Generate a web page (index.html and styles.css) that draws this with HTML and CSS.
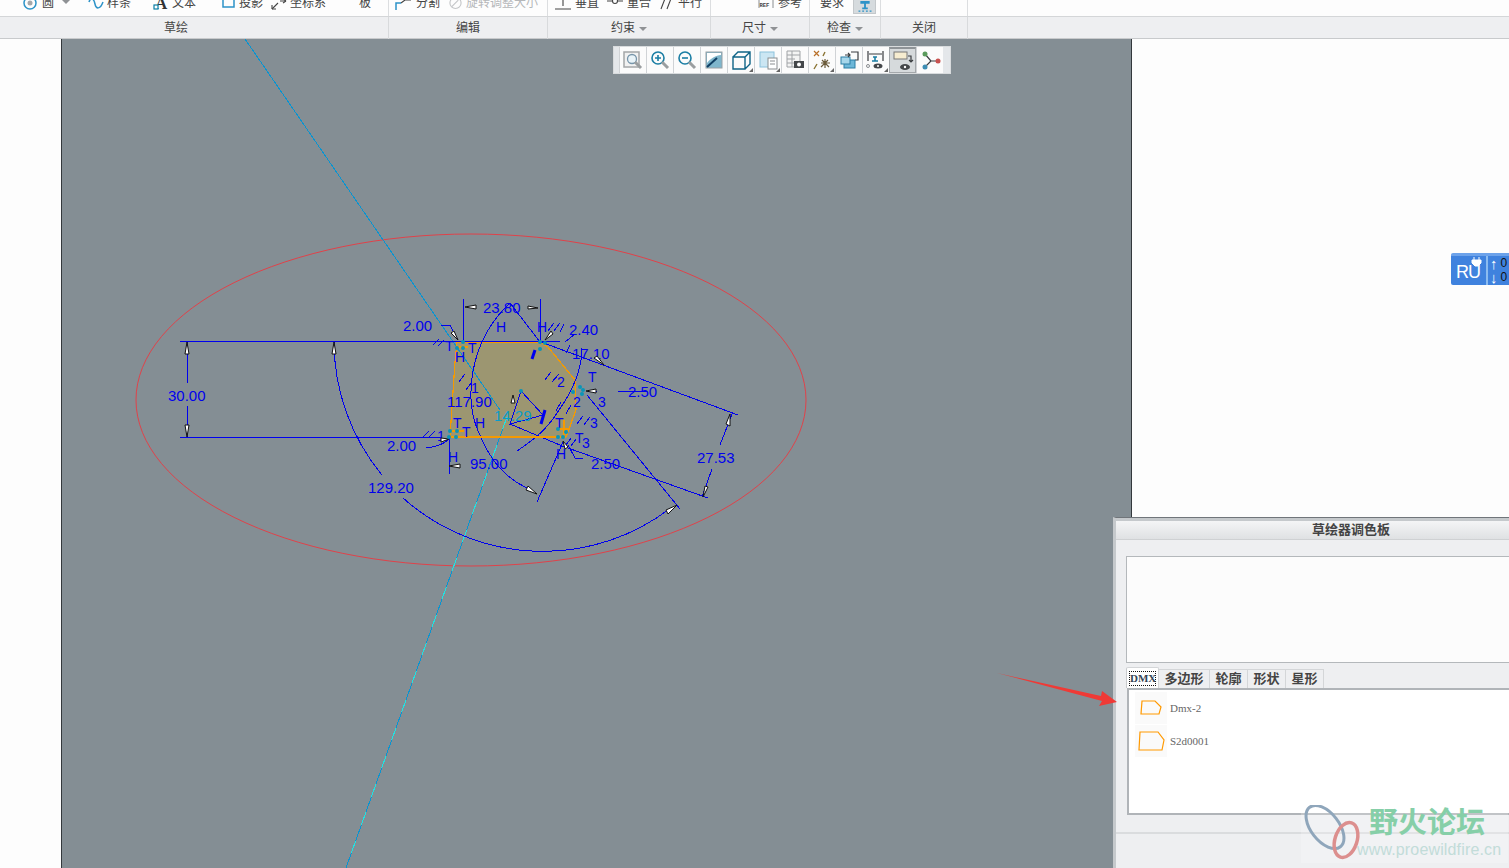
FILE: index.html
```html
<!DOCTYPE html>
<html lang="zh">
<head>
<meta charset="utf-8">
<title>草绘器调色板</title>
<link rel="stylesheet" href="styles.css">
</head>
<body>
<div class="app">
  <header class="ribbon">
    <div class="tools">
      <div class="group">
        <div class="tool t-circle"><svg class="ic" viewBox="0 0 16 16"><circle cx="8" cy="9" r="6" class="s-blue"/><circle cx="8" cy="9" r="2.500" class="f-grey"/></svg><span>圆</span><i class="caret caret-gap"></i></div>
        <div class="tool t-spline"><svg class="ic" viewBox="0 0 16 16"><path d="M1 8c2-6 5-3 6 2s5 6 8-2" class="s-blue"/></svg><span>样条</span></div>
        <div class="tool t-text"><svg class="ic" viewBox="0 0 16 16"><text x="2" y="15" class="ic-a">A</text><rect x="1" y="11" width="4" height="4" class="s-teal"/></svg><span>文本</span></div>
        <div class="tool t-proj"><svg class="ic ic-n" viewBox="0 0 13 16"><path d="M1 0v13h11V0" class="s-blue"/></svg><span>投影</span></div>
        <div class="tool t-coord"><svg class="ic" viewBox="0 0 16 16"><path d="M1 15l6-6m2-2h6" class="s-dark"/><path d="M1 15v-4M1 15h4M15 7l-3-2M15 7l-3 2" class="s-dark"/></svg><span>坐标系</span></div>
        <div class="tool t-board"><span>板</span></div>
      </div>
      <div class="group">
        <div class="tool t-split"><svg class="ic ic-w" viewBox="0 0 17 16"><path d="M1 16V9h5" class="s-blue"/><path d="M6 9l4-3h6" class="s-dark"/></svg><span>分割</span></div>
        <div class="tool t-rotate dim"><svg class="ic ic-n" viewBox="0 0 14 16"><circle cx="7" cy="9" r="6" class="s-light"/><path d="M3 13l7-7" class="s-light"/></svg><span>旋转调整大小</span></div>
      </div>
      <div class="group">
        <div class="tool t-perp"><svg class="ic" viewBox="0 0 16 16"><path d="M8 3v9M3 3h10M0 15h16" class="s-dark"/></svg><span>垂直</span></div>
        <div class="tool t-coin"><svg class="ic" viewBox="0 0 16 16"><path d="M0 7h5m6 0h5" class="s-dark"/><circle cx="8" cy="7" r="2.500" class="s-dark"/></svg><span>重合</span></div>
        <div class="tool t-para"><svg class="ic ic-n" viewBox="0 0 13 16"><path d="M1 15L6 2M7 15l5-13" class="s-dark"/></svg><span>平行</span></div>
      </div>
      <div class="group">
        <div class="tool t-ref"><svg class="ic" viewBox="0 0 16 16"><path d="M1 0v14M15 0v14" class="s-mid"/><text x="1.500" y="13" class="ic-ref">REF</text></svg><span>参考</span></div>
      </div>
      <div class="group">
        <div class="tool t-req"><span>要求</span></div>
        <div class="active-tool"><svg class="ic ic-beam" viewBox="0 0 16 14"><path d="M3 1h10v3H9v4h2v2H5V8h2V4H3z" class="f-blue"/><path d="M1 12h14" class="s-dash"/></svg></div>
      </div>
      <div class="group"></div>
      <div class="group group-rest"></div>
    </div>
    <div class="labels">
      <div class="label">草绘</div>
      <div class="label">编辑</div>
      <div class="label">约束<i class="caret"></i></div>
      <div class="label">尺寸<i class="caret"></i></div>
      <div class="label">检查<i class="caret"></i></div>
      <div class="label">关闭</div>
      <div class="label label-rest"></div>
    </div>
  </header>

  <main class="workspace">
    <div class="gutter"></div>
    <section class="canvas">
      <svg class="sketch" viewBox="61 39 1071 829">
        <ellipse cx="471" cy="400" rx="335" ry="166" class="red"/>
        <polygon points="457,342 540,342 548,347 575,380 576,410 566,437 450,437 455,362" class="profile"/>
        <path d="M245 39L500 410M507 417L346 868" class="cyan"/>
        <path d="M507 417L346 868" class="cyan-dash"/>
        <path d="M180 341.500H441M180 437.500H441M187 342V383M187 406V437M334 342A210 210 0 0 0 382 475M403 498A210 210 0 0 0 672 507" class="dim-line"/>
        <path d="M463 299V341M540 299V341M510 303L540 342M541 342L738 415M565 447L708 498M587 395L680 509M702 497L712 469M720 445L732 414M537 502L563 442M510 303C470 340 462 400 480 435C490 460 505 478 527 488M582 348C582 372 570 395 557 413C545 432 530 442 517 451M521 391L543 415L510 424L521 391M510 424L567 448M618 391H647M587 391H597M441 341H560M449 437V474M441 325H450L458 340M426 448C436 447 444 444 449 439M575 334L565 342" class="dim-line"/>
        <path d="M568 445L575 458H583" class="dim-line"/>
        <path d="M449 437H560M573 392H576M564 420V437M457 347H468M450 431H464M558 429H570" class="orange"/>
        <path d="M535 350L532 359M545 410L541 424" class="thick"/>
        <path d="M433 345l6-6M438 346l6-6M423 437l6-6M428 438l7-7M459 382l6-8M466 390l6-8M545 380l6-8M552 382l7-8M577 424l6-8M584 425l6-8M548 331l6-8M554 331l6-8M560 332l4-8M570 345l-4 8M561 402l-5 9M571 405l-5 9M566 445l5-7M571 446l5-7" class="dim-line"/>
        <g class="mark">
          <text x="496" y="332">H</text>
          <text x="537" y="332">H</text>
          <text x="445" y="351">T</text>
          <text x="455" y="362">H</text>
          <text x="468" y="353">T</text>
          <text x="437" y="441">1</text>
          <text x="471" y="393">1</text>
          <text x="475" y="428">H</text>
          <text x="453" y="428">T</text>
          <text x="462" y="437">T</text>
          <text x="448" y="462">H</text>
          <text x="557" y="387">2</text>
          <text x="573" y="407">2</text>
          <text x="588" y="382">T</text>
          <text x="598" y="407">3</text>
          <text x="590" y="428">3</text>
          <text x="582" y="448">3</text>
          <text x="575" y="443">T</text>
          <text x="556" y="459">H</text>
          <text x="555" y="428">T</text>
        </g>
        <g class="dim-text">
          <text x="483" y="313">23.80</text>
          <text x="569" y="335">2.40</text>
          <text x="572" y="359">17.10</text>
          <text x="403" y="331">2.00</text>
          <text x="628" y="397">2.50</text>
          <text x="168" y="401">30.00</text>
          <text x="447" y="407">117.90</text>
          <text x="387" y="451">2.00</text>
          <text x="470" y="469">95.00</text>
          <text x="591" y="469">2.50</text>
          <text x="697" y="463">27.53</text>
          <text x="368" y="493">129.20</text>
        </g>
        <text x="494" y="421" class="cyan-text">14.29</text>
        <g class="arrow">
          <polygon points="465,307 476,305 476,309"/>
          <polygon points="538,308 528,306 528,309"/>
          <polygon points="458,340 451,333 454,331"/>
          <polygon points="545,340 551,331 553,334"/>
          <polygon points="604,365 597,356 594,358"/>
          <polygon points="586,391 596,389 596,393"/>
          <polygon points="511,403 515,403 513,395"/>
          <polygon points="449,439 441,438 441,442"/>
          <polygon points="449,466 460,464 460,468"/>
          <polygon points="187,342 185,354 189,354"/>
          <polygon points="187,437 185,425 189,425"/>
          <polygon points="334,342 332,354 336,354"/>
          <polygon points="677,505 666,510 668,514"/>
          <polygon points="537,494 526,490 528,486"/>
          <polygon points="730,414 726,424 730,426"/>
          <polygon points="703,497 705,486 708,487"/>
          <polygon points="563,441 568,447 565,449"/>
        </g>
        <g class="vertex">
          <circle cx="463" cy="342" r="2"/><circle cx="457" cy="348" r="2"/><circle cx="463" cy="348" r="2"/>
          <circle cx="540" cy="342" r="2"/><circle cx="545" cy="343" r="2"/><circle cx="540" cy="349" r="2"/>
          <circle cx="580" cy="387" r="2"/><circle cx="573" cy="392" r="2"/><circle cx="583" cy="390" r="2"/><circle cx="582" cy="394" r="2"/>
          <circle cx="558" cy="429" r="2"/><circle cx="566" cy="432" r="2"/><circle cx="558" cy="437" r="2"/><circle cx="563" cy="437" r="2"/>
          <circle cx="450" cy="431" r="2"/><circle cx="457" cy="431" r="2"/><circle cx="449" cy="437" r="2"/><circle cx="456" cy="437" r="2"/>
          <circle cx="521" cy="391" r="2"/>
        </g>
      </svg>
      <nav class="viewbar">
        <div class="vb"><svg viewBox="0 0 22 22"><rect x="2" y="3" width="15" height="15" class="s-box"/><circle cx="10" cy="10" r="4.500" class="s-steel"/><path d="M13 13l6 6" class="s-thick"/></svg></div>
        <div class="vb"><svg viewBox="0 0 22 22"><circle cx="9" cy="9" r="6" class="s-teal2"/><path d="M6 9h6M9 6v6" class="s-teal2"/><path d="M13 13l6 6" class="s-thick"/></svg></div>
        <div class="vb"><svg viewBox="0 0 22 22"><circle cx="9" cy="9" r="6" class="s-teal2"/><path d="M6 9h6" class="s-teal2"/><path d="M13 13l6 6" class="s-thick"/></svg></div>
        <div class="vb"><svg viewBox="0 0 22 22"><rect x="3" y="3" width="16" height="16" class="paint"/><path d="M4 4h14v2C13 6 7 10 4 14z" class="f-white"/><path d="M4 18L14 9" class="s-navy"/></svg></div>
        <div class="vb"><svg viewBox="0 0 22 22"><path d="M3 8h12v12H3zM3 8l5-5h12v12l-5 5M15 8l5-5" class="s-cube"/></svg><b class="corner"></b></div>
        <div class="vb"><svg viewBox="0 0 22 22"><rect x="3" y="3" width="14" height="15" class="pale"/><rect x="11" y="9" width="9" height="11" class="s-mid2"/><path d="M13 12h5M13 15h5" class="s-mid"/></svg><b class="corner"></b></div>
        <div class="vb"><svg viewBox="0 0 22 22"><path d="M3 2h13v16H3zM3 6h13M3 10h8M3 14h8M8 2v16" class="s-table"/><rect x="10" y="12" width="10" height="7" class="f-ink"/><circle cx="15" cy="15.500" r="2" class="f-white"/></svg></div>
        <div class="vb"><svg viewBox="0 0 22 22"><path d="M3 2l5 5M8 2L3 7" class="s-orange2"/><path d="M12 7l2-4M3 20l3-5" class="s-olive"/><path d="M10 14h9M14 10v9M11 11l7 7M17 11l-7 7" class="s-brown"/></svg><b class="corner"></b></div>
        <div class="vb"><svg viewBox="0 0 22 22"><path d="M13 3h7v8h-3" class="s-ink"/><rect x="6" y="11" width="11" height="8" class="f-sky"/><rect x="3" y="8" width="9" height="7" class="f-sky2"/><path d="M7 6h5M10 4l2 2-2 2" class="s-ink"/></svg></div>
        <div class="vb"><svg viewBox="0 0 22 22"><path d="M3 2v10M18 2v10M4 5h13" class="s-ink"/><path d="M8 8h4M10 8v4M7 12h6" class="s-teal2"/><circle cx="3" cy="17" r="1.500" class="s-mid"/><ellipse cx="13" cy="17" rx="4.500" ry="2.500" class="f-ink"/><circle cx="13" cy="17" r="1" class="f-white"/></svg><b class="corner"></b></div>
        <div class="vb vb-on"><svg viewBox="0 0 22 22"><rect x="2" y="2" width="13" height="7" class="f-cream"/><path d="M16 6h3v6M17 10l2 2 2-2" class="s-ink"/><ellipse cx="13" cy="17" rx="5" ry="3" class="f-ink"/><circle cx="13" cy="17" r="1.200" class="f-white"/></svg></div>
        <div class="vb"><svg viewBox="0 0 22 22"><path d="M6 5l6 7-6 6M12 12h7" class="s-ink"/><circle cx="6" cy="5" r="2.500" class="f-green"/><circle cx="19" cy="12" r="2.500" class="f-red"/><circle cx="6" cy="18" r="2.500" class="f-sky3"/></svg></div>
      </nav>
    </section>
    <div class="rightside"></div>
  </main>

  <aside class="net">
    <div class="net-logo"><span class="net-ru">RU</span><svg class="plug" viewBox="0 0 12 12"><path d="M3 0v3M8 0v3M1 3h9v3l-3 3H4L1 6z" class="plug-shape"/></svg></div>
    <div class="net-rates"><div class="rate"><b>↑</b><span>0</span></div><div class="rate"><b>↓</b><span>0</span></div></div>
  </aside>

  <section class="palette">
    <h2 class="pal-title">草绘器调色板</h2>
    <div class="pal-preview"></div>
    <div class="pal-tabs">
      <div class="tab tab-on"><span class="tab-focus">DMX</span></div>
      <div class="tab tab-w50">多边形</div>
      <div class="tab">轮廓</div>
      <div class="tab">形状</div>
      <div class="tab">星形</div>
    </div>
    <div class="pal-list">
      <div class="item">
        <div class="thumb"><svg class="sh1" viewBox="0 0 22 16"><path d="M2 1h13l6 6-2 7H1z" class="shape"/></svg></div>
        <span>Dmx-2</span>
      </div>
      <div class="item">
        <div class="thumb"><svg class="sh2" viewBox="0 0 27 20"><path d="M2 1h18l6 8-2 10H1z" class="shape"/></svg></div>
        <span>S2d0001</span>
      </div>
    </div>
    <div class="pal-foot"></div>
    <div class="watermark">
      <svg class="wm-logo" viewBox="0 0 60 58"><ellipse cx="22" cy="22" rx="14" ry="25" transform="rotate(-38 22 22)" class="wm-blue"/><ellipse cx="43" cy="35" rx="11" ry="18" transform="rotate(18 43 35)" class="wm-red"/></svg>
      <div class="wm-text">
        <div class="wm-cn">野火论坛</div>
        <div class="wm-url">www.proewildfire.cn</div>
      </div>
    </div>
  </section>

  <svg class="pointer" viewBox="0 0 122 36"><polygon points="0,1 104,24 105,19 120,30 102,34 105,29"/></svg>
</div>
</body>
</html>
```
FILE: styles.css
```css
* { box-sizing: border-box; }
html, body { margin: 0; height: 100%; }
body { background: #fdfdfd; overflow: hidden; font-family: "Liberation Sans", "Noto Sans CJK SC", sans-serif; font-size: 12px; color: #444; }
.app { position: relative; width: 1509px; height: 868px; overflow: hidden; display: flex; flex-direction: column; }

/* ribbon */
.ribbon { flex: none; }
.tools, .labels { display: grid; grid-template-columns: 389px 159px 163px 99px 71px 87px 1fr; }
.tools { height: 17px; overflow: hidden; border-bottom: 1px solid #d4d6d8; background: #fdfdfd; }
.group { display: flex; height: 17px; border-right: 1px solid #dcdee0; align-items: flex-start; }
.group-rest { border-right: 0; }
.tool { display: flex; align-items: flex-end; gap: 4px; height: 16px; margin-top: -6px; line-height: 14px; white-space: nowrap; flex: none; }
.tool span { font-size: 12px; }
.dim { color: #b5b7b9; }
.ic { display: block; width: 16px; height: 16px; flex: none; }
.ic-n { width: 13px; }
.ic-w { width: 17px; }
.ic-a { font: bold 17px "Liberation Serif", serif; fill: #333; }
.ic-ref { font: bold 5.500px "Liberation Mono", monospace; fill: #444; }
.t-circle { margin-left: 22px; }
.t-spline { margin-left: 18px; gap: 3px; }
.t-text { margin-left: 22px; gap: 3px; }
.t-proj { margin-left: 26px; }
.t-coord { margin-left: 8px; gap: 3px; }
.t-board { margin-left: 33px; }
.t-split { margin-left: 6px; }
.t-rotate { margin-left: 9px; }
.t-perp { margin-left: 7px; }
.t-coin { margin-left: 8px; }
.t-para { margin-left: 9px; gap: 5px; }
.t-ref { margin-left: 47px; }
.t-req { margin-left: 10px; }
.caret-gap { margin-left: 3px; align-self: center; }
.active-tool { margin-left: 9px; width: 23px; height: 14px; background: #d6dbde; border: 1px solid #c4c8cb; border-top: 0; display: flex; justify-content: center; align-items: flex-end; }
.ic-beam { width: 16px; height: 13px; }
.caret { display: inline-block; width: 0; height: 0; margin-left: 4px; border: 4px solid transparent; border-top: 4px solid #8f9295; border-bottom: 0; vertical-align: middle; }

.labels { height: 22px; background: #eeeff1; border-bottom: 1px solid #c8cacc; }
.label { text-align: center; line-height: 22px; font-size: 12px; border-right: 1px solid #d8dadc; color: #444; padding-right: 36px; }
.label:nth-child(n+2) { padding-right: 0; }
.label-rest { border-right: 0; }

/* stroke + fill helpers */
svg * { fill: none; }
.s-blue { stroke: #2d93c8; stroke-width: 1.500; }
.s-teal { stroke: #0d7fa5; stroke-width: 1.200; fill: #fff; }
.s-dark { stroke: #444; stroke-width: 1.100; }
.s-light { stroke: #c4c6c8; stroke-width: 1.200; }
.s-mid { stroke: #8a8d90; stroke-width: 1; }
.s-mid2 { stroke: #8a8d90; stroke-width: 1; fill: #fff; }
.s-box { stroke: #a4a6a8; stroke-width: 1.500; fill: #f1f1f1; }
.s-table { stroke: #a0a3a6; stroke-width: 1; fill: #f4f4f4; }
.s-steel { stroke: #7795aa; stroke-width: 1.300; fill: #e9f3f8; }
.s-thick { stroke: #9a9ea0; stroke-width: 3; }
.s-teal2 { stroke: #1b7ea4; stroke-width: 1.600; }
.s-navy { stroke: #103f63; stroke-width: 2; }
.s-cube { stroke: #0f6487; stroke-width: 1.400; }
.s-orange2 { stroke: #b8702a; stroke-width: 1.200; }
.s-olive { stroke: #8a7434; stroke-width: 1.400; }
.s-brown { stroke: #6b5a3a; stroke-width: 1.200; }
.s-ink { stroke: #3a3d40; stroke-width: 1.200; }
.s-dash { stroke: #2d93c8; stroke-width: 1.200; stroke-dasharray: 2 2; }
.f-grey { fill: #a4a7aa; }
.f-blue { fill: #2d93c8; }
.f-ink { fill: #44474a; }
.f-white { fill: #fff; }
.f-sky { fill: #6db7d8; stroke: #2d7fa5; }
.f-sky2 { fill: #a6d6ea; stroke: #2d7fa5; }
.f-sky3 { fill: #3e8eb4; }
.f-green { fill: #5a9a5c; }
.f-red { fill: #c8514f; }
.f-cream { fill: #f6ecd0; stroke: #777; }
.paint { fill: #7fb6cc; stroke: #9aa0a4; }
.pale { fill: #cbe6f3; stroke: #8cc2dc; }

/* workspace */
.workspace { flex: 1; display: flex; min-height: 0; }
.gutter { width: 61px; flex: none; }
.canvas { position: relative; width: 1071px; flex: none; background: #848e94; border-left: 1px solid #33383c; border-right: 1px solid #33383c; }
.rightside { flex: 1; }
.sketch { display: block; width: 1071px; height: 829px; margin-left: -1px; }
.red { stroke: #e0424a; stroke-width: 1; }
.profile { fill: #9c9671; stroke: #f59a00; stroke-width: 1.200; shape-rendering: crispEdges; }
.cyan { stroke: #0a94d0; stroke-width: 1; shape-rendering: crispEdges; }
.cyan-dash { stroke: #1ee4e4; stroke-width: 1; stroke-dasharray: 13 17; shape-rendering: crispEdges; }
.dim-line { stroke: #0000ee; stroke-width: 1; shape-rendering: crispEdges; }
.orange { stroke: #f59a00; stroke-width: 1.200; shape-rendering: crispEdges; }
.thick { stroke: #0000ee; stroke-width: 3; }
.dim-text text { font: 15px "Liberation Sans", sans-serif; fill: #0000ee; }
.mark text { font: 14px "Liberation Sans", sans-serif; fill: #0000ee; }
.cyan-text { font: 15px "Liberation Sans", sans-serif; fill: #0a9cc8; }
.arrow polygon { fill: #fff; stroke: #111; stroke-width: 1; }
.vertex circle { fill: #0a95b8; }

/* floating view bar */
.viewbar { position: absolute; left: 551px; top: 7px; width: 338px; height: 28px; padding: 0 5px; display: flex; background: #e4e7ea; border: 1px solid #d8dbdd; }
.vb { position: relative; width: 27px; flex: none; height: 26px; background: #fbfbfb; border-left: 1px solid #d0d3d6; display: flex; align-items: center; justify-content: center; }
.vb svg { width: 22px; height: 22px; display: block; }
.vb-on { background: #d6dadc; border: 1px solid #a4a8ab; border-top: 2px solid #8e9397; }
.corner { position: absolute; right: 1px; bottom: 1px; width: 0; height: 0; border-left: 4px solid transparent; border-bottom: 4px solid #666; }

/* network widget */
.net { position: absolute; left: 1451px; top: 253px; width: 58px; height: 32px; display: flex; background: #3f82de; border-top: 3px solid #6ca2ea; border-radius: 2px 0 0 2px; }
.net-logo { position: relative; width: 37px; border-right: 2px solid #8cbcf0; color: #fff; }
.net-ru { display: block; margin: 4px 0 0 5px; font: 18px/24px "Liberation Sans", sans-serif; letter-spacing: -1px; }
.plug { position: absolute; left: 20px; top: 1px; width: 12px; height: 12px; }
.plug-shape { fill: #fff; stroke: #fff; }
.net-rates { flex: 1; padding: 0 0 0 2px; }
.rate { display: flex; height: 14px; align-items: center; gap: 3px; font-size: 12px; }
.rate b { color: #fff; font-size: 15px; }
.rate span { color: #111; }

/* palette */
.palette { position: absolute; left: 1113px; top: 517px; width: 473px; height: 351px; background: #eeeff1; border-top: 1px solid #70757a; border-left: 3px solid #c5c9cc; }
.palette::before { content: ""; display: block; height: 3px; background: #c5c9cc; }
.pal-title { margin: 0; height: 19px; font-size: 13px; line-height: 18px; font-weight: bold; text-align: center; color: #444; background: linear-gradient(#f4f5f6, #dfe1e3); border-bottom: 1px solid #cfd1d3; }
.pal-preview { height: 107px; margin: 16px 0 0 10px; background: #fcfcfc; border: 1px solid #b4b8bb; }
.pal-tabs { display: flex; align-items: flex-end; height: 21px; margin: 4px 0 0 10px; }
.tab { width: 38px; height: 19px; font-size: 13px; font-weight: bold; line-height: 18px; text-align: center; color: #444; border: 1px solid #d4d6d8; border-left: 0; border-bottom: 0; }
.tab-w50 { width: 51px; }
.tab-on { width: 33px; height: 21px; background: #fff; border-left: 1px solid #c8cacc; padding: 3px 2px 0; line-height: 13px; border-radius: 2px 2px 0 0; }
.tab-focus { display: block; height: 15px; font: bold 11px/13px "Liberation Serif", serif; color: #345; border: 1px dotted #111; }
.pal-list { height: 127px; margin-left: 11px; padding: 0 6px; background: #fff; border: 2px solid #b0b4b8; border-right: 0; border-bottom-width: 2px; }
.item { display: flex; align-items: center; gap: 3px; height: 33px; font: 11px "Liberation Serif", serif; color: #666; }
.item:first-child { margin-top: 1px; }
.thumb { width: 32px; height: 32px; background: #fafafa; display: flex; align-items: center; justify-content: center; }
.sh1 { width: 22px; height: 16px; }
.sh2 { width: 27px; height: 20px; }
.shape { stroke: #ff9900; stroke-width: 1.200; }
.pal-foot { height: 2px; margin-top: 17px; background: #dadcde; }

/* watermark */
.watermark { position: absolute; left: 185px; top: 287px; width: 207px; height: 58px; display: flex; background: rgba(255,255,255,.22); }
.wm-logo { width: 60px; height: 58px; flex: none; margin-left: 2px; }
.wm-blue { stroke: #8fa6bb; stroke-width: 3; }
.wm-red { stroke: #dc8f8e; stroke-width: 3.500; }
.wm-text { margin-left: 6px; }
.wm-cn { margin-top: -1px; font: bold 29px/32px "Noto Sans CJK SC", sans-serif; color: #86cfa8; white-space: nowrap; }
.wm-url { margin: 4px 0 0 -12px; font: 16px/20px "Liberation Sans", sans-serif; letter-spacing: .15px; color: #c2dcd9; white-space: nowrap; }

/* red pointer */
.pointer { position: absolute; left: 997px; top: 672px; width: 122px; height: 36px; }
.pointer polygon { fill: #ef3a36; }
```
